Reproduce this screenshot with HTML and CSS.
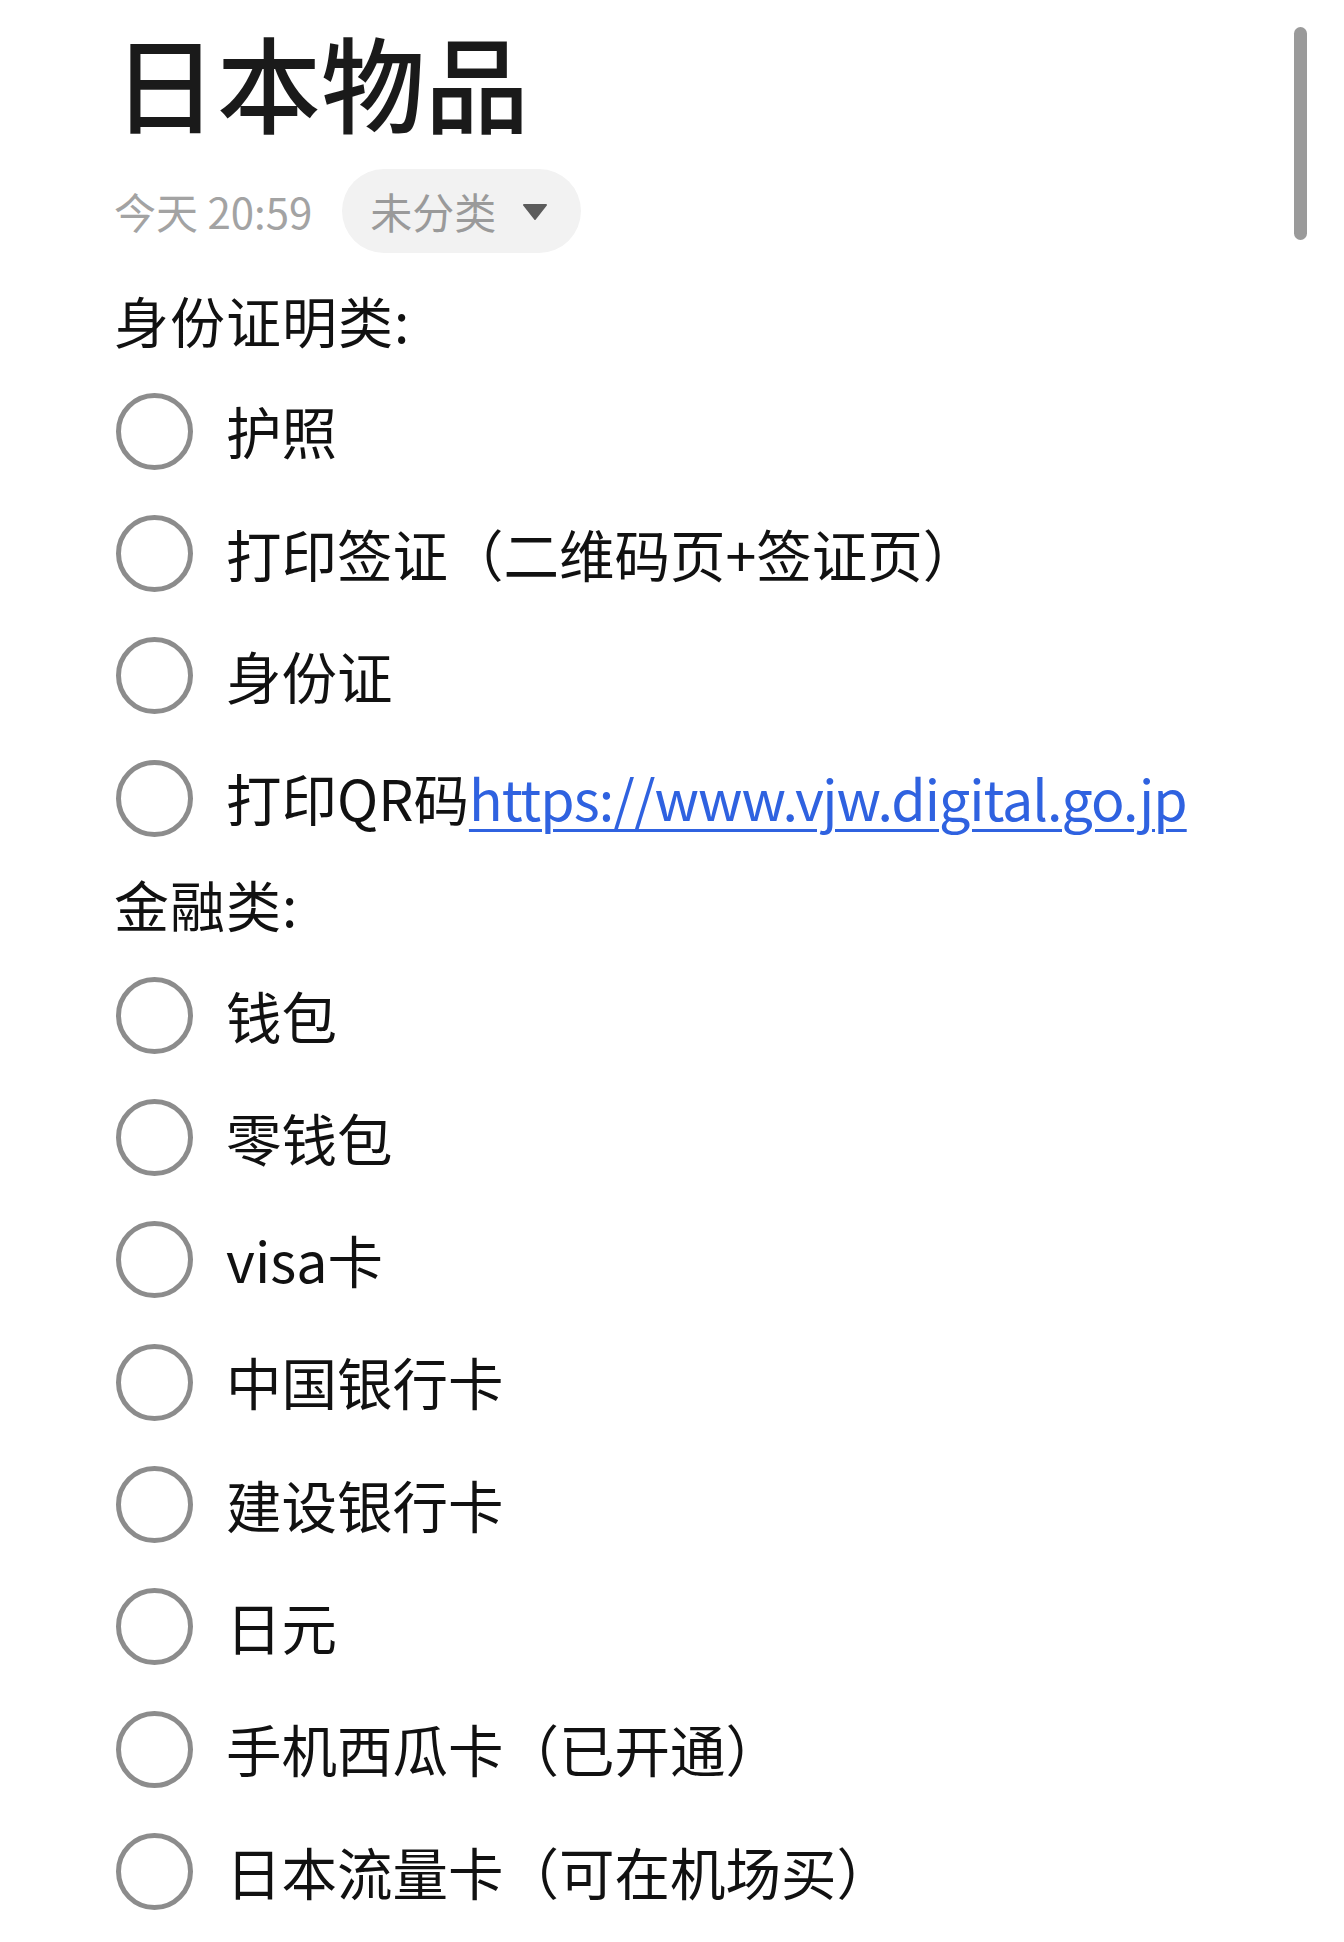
FILE: index.html
```html
<!DOCTYPE html>
<html lang="zh-CN">
<head>
<meta charset="utf-8">
<title>日本物品</title>
<link rel="stylesheet" href="styles.css">
</head>
<body>
<div class="page">
  <h1 class="title">日本物品</h1>
  <div class="meta">
    <span class="date">今天 20:59</span>
    <span class="pill">未分类<svg class="caret" viewBox="0 0 24 16" width="24" height="16"><path d="M1 1 H23 L12 15 Z" fill="#5c5c5c" stroke="#5c5c5c" stroke-width="2" stroke-linejoin="round"/></svg></span>
  </div>

  <div class="section">身份证明类:</div>
  <ul class="checklist">
    <li class="item"><span class="check"></span><span class="label">护照</span></li>
    <li class="item"><span class="check"></span><span class="label">打印签证（二维码页+签证页）</span></li>
    <li class="item"><span class="check"></span><span class="label">身份证</span></li>
    <li class="item"><span class="check"></span><span class="label">打印QR码<a class="link" href="#">https://www.vjw.digital.go.jp</a></span></li>
  </ul>

  <div class="section">金融类:</div>
  <ul class="checklist">
    <li class="item"><span class="check"></span><span class="label">钱包</span></li>
    <li class="item"><span class="check"></span><span class="label">零钱包</span></li>
    <li class="item"><span class="check"></span><span class="label">visa卡</span></li>
    <li class="item"><span class="check"></span><span class="label">中国银行卡</span></li>
    <li class="item"><span class="check"></span><span class="label">建设银行卡</span></li>
    <li class="item"><span class="check"></span><span class="label">日元</span></li>
    <li class="item"><span class="check"></span><span class="label">手机西瓜卡（已开通）</span></li>
    <li class="item"><span class="check"></span><span class="label">日本流量卡（可在机场买）</span></li>
  </ul>
</div>
<div class="scrollbar"></div>
</body>
</html>
```

FILE: styles.css
```css
html, body {
  margin: 0;
  padding: 0;
  background: #ffffff;
}

body {
  font-family: "Noto Sans CJK SC", "Noto Sans", sans-serif;
  color: #111111;
  width: 1344px;
  height: 1942px;
  overflow: hidden;
  position: relative;
}

.page {
  padding-left: 116px;
  padding-right: 80px;
}

.title {
  margin: 16px 0 0 0;
  font-size: 104px;
  line-height: 130px;
  font-weight: 500;
  color: #1a1a1a;
  letter-spacing: 0;
  margin-left: -3px;
}

.meta {
  margin-top: 23px;
  margin-bottom: 22px;
  height: 84px;
  display: flex;
  align-items: center;
  gap: 30px;
}

.date {
  font-size: 42px;
  color: #a3a3a3;
  line-height: 1;
  margin-left: -2px;
}

.pill {
  height: 84px;
  box-sizing: border-box;
  padding: 0 34px 0 28px;
  border-radius: 42px;
  background: #f2f2f2;
  display: flex;
  align-items: center;
  gap: 27px;
  font-size: 42px;
  color: #9a9a9a;
  line-height: 1;
}

.caret {
  display: block;
  margin-top: 2px;
}

.section {
  height: 95px;
  box-sizing: border-box;
  padding-bottom: 6px;
  display: flex;
  align-items: center;
  font-size: 55px;
  line-height: 1;
  color: #111111;
  margin-left: -2px;
  letter-spacing: 1px;
}

.checklist {
  list-style: none;
  margin: 0;
  padding: 0;
}

.item {
  height: 122.3px;
  display: flex;
  align-items: center;
}

.check {
  flex: none;
  width: 77px;
  height: 77px;
  box-sizing: border-box;
  border: 5px solid #8c8c8c;
  border-radius: 50%;
  margin-right: 33px;
}

.label {
  font-size: 55.5px;
  line-height: 1;
  white-space: nowrap;
  color: #111111;
}

.link {
  color: #2f62e0;
  text-decoration: underline;
  text-decoration-thickness: 3px;
  text-underline-offset: 8px;
  letter-spacing: -1px;
}

.scrollbar {
  position: absolute;
  top: 27px;
  right: 37px;
  width: 13px;
  height: 213px;
  border-radius: 7px;
  background: #9a9a9a;
}
```
